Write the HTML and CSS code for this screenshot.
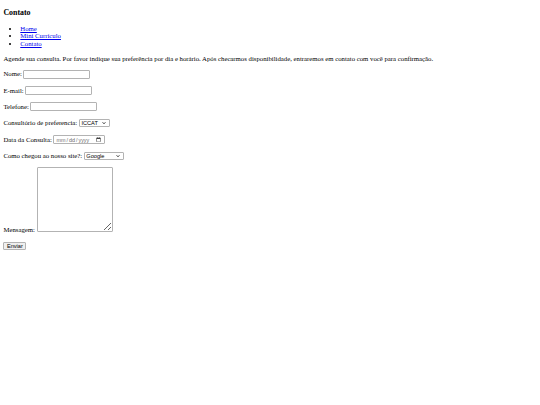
FILE: index.html
```html
<!DOCTYPE html>
<html lang="pt-BR">
<head>
<meta charset="utf-8">
<title>Contato</title>
<link rel="stylesheet" href="styles.css">
</head>
<body class="page">
<h3 class="title">Contato</h3>
<ul class="nav">
<li class="nav-item"><a class="link" href="#">Home</a></li>
<li class="nav-item"><a class="link" href="#">Mini Currículo</a></li>
<li class="nav-item"><a class="link" href="#">Contato</a></li>
</ul>
<p class="intro">Agende sua consulta. Por favor indique sua preferência por dia e horário. Após checarmos disponibilidade, entraremos em contato com você para confirmação.</p>
<form class="form">
<p class="row"><span>Nome:</span><input type="text" class="field"></p>
<p class="row"><span>E-mail:</span><input type="email" class="field"></p>
<p class="row"><span>Telefone:</span><input type="tel" class="field"></p>
<p class="row"><span>Consultório de preferencia:</span><select class="select select-short"><option>ICCAT</option></select></p>
<p class="row"><span>Data da Consulta:</span><input type="date" class="field date"></p>
<p class="row"><span>Como chegou ao nosso site?:</span><select class="select select-long"><option>Google</option><option>Facebook</option><option>Indicação</option></select></p>
<p class="row row-message"><span>Mensagem:</span><textarea class="message"></textarea></p>
<p class="row row-send"><button type="button" class="send">Enviar</button></p>
</form>
</body>
</html>
```
FILE: styles.css
```css
html { background: #fff; }
.page {
  margin: 0;
  padding: 0 3.4px;
  font-family: "Liberation Serif", "Times New Roman", serif;
  font-size: 6.75px;
  line-height: 7.75px;
  color: #000;
}
.title {
  font-size: 7.9px;
  line-height: 9px;
  margin: 8px 0 0;
  font-weight: bold;
}
.nav {
  margin: 7.6px 0 0;
  padding-left: 16.9px;
  list-style: disc;
}
.nav-item { line-height: 7.5px; }
.link { color: #0000ee; text-decoration: underline; }
.intro { margin: 7.6px 0 0; }
.form { margin: 0; }
.row {
  display: flex;
  align-items: center;
  gap: 1.7px;
  height: 9.4px;
  margin: 7px 0 0;
}
.field, .select, .send, .message {
  font-family: "Liberation Sans", Arial, sans-serif;
  font-size: 5.625px;
  color: #000;
  border: 1px solid #b3b3b3;
  border-radius: 1px;
  background-color: #fff;
  box-sizing: border-box;
  margin: 0;
}
.field { width: 67px; height: 9px; padding: 0 1px; }
.date { width: 52px; color: #6e6e6e; font-size: 5.4px; }
.select {
  appearance: none;
  -webkit-appearance: none;
  height: 8px;
  padding: 0 6px 0 1.5px;
  line-height: 6px;
  background-image: url("data:image/svg+xml,%3Csvg xmlns='http://www.w3.org/2000/svg' width='10' height='6' viewBox='0 0 10 6'%3E%3Cpath d='M1 1l4 4 4-4' fill='none' stroke='%23222' stroke-width='2.2'/%3E%3C/svg%3E");
  background-repeat: no-repeat;
  background-position: right 2.5px center;
  background-size: 4px 2.4px;
}
.select-short { width: 31px; }
.select-long { width: 40px; }
.row-message {
  height: 67px;
  align-items: flex-end;
  margin-top: 6.2px;
}
.message {
  width: 76px;
  height: 65px;
  padding: 1px;
  resize: both;
  margin-bottom: 1.5px;
}
.row-send { margin-top: 7.4px; }
.send {
  background-color: #efefef;
  height: 8.5px;
  width: 23px;
  padding: 0;
  line-height: 6px;
}
```
